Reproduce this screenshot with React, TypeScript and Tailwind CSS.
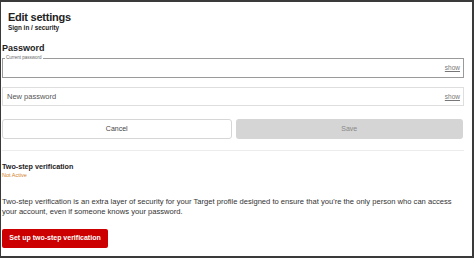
import React from "react";

export default function App() {
  return (
    <div
      className="w-[474px] h-[258px] bg-[#3a3a3a] pt-[2px] pr-[2px] pb-[2px] pl-[1px] overflow-hidden"
      style={{ fontFamily: '"Liberation Sans", Arial, Helvetica, sans-serif' }}
    >
      <div className="bg-white h-full pl-[1px] pr-[8px] pt-[10px] text-[#222]">
        <div className="pl-[6px]">
          <div className="text-[11px] leading-[11px] font-bold tracking-[-0.25px]">Edit settings</div>
          <div className="mt-[1px] text-[6.4px] leading-[7px] font-bold">Sign in / security</div>
        </div>
        <div className="mt-[13px] text-[9px] leading-[9px] font-bold">Password</div>
        <div className="mt-[5px] relative h-[20px] border border-[#9a9a9a] flex items-center justify-end pr-[3px]">
          <span className="absolute left-[2px] top-[-4px] bg-white px-[1px] text-[4.5px] leading-[6px] text-[#666]">
            Current password
          </span>
          <span className="text-[6.5px] text-[#777] underline">show</span>
        </div>
        <div className="mt-[9px] h-[19px] border border-[#dedede] flex items-center justify-between pl-[4px] pr-[3px]">
          <span className="text-[7.5px] text-[#555]">New password</span>
          <span className="text-[6.5px] text-[#777] underline">show</span>
        </div>
        <div className="mt-[13px] flex gap-[4px] pr-[1px]">
          <button className="flex-1 h-[20px] rounded-[3px] border border-[#d6d6d6] bg-white text-[7px] text-[#444]">
            Cancel
          </button>
          <button className="flex-1 h-[20px] rounded-[3px] bg-[#d5d5d5] text-[7px] text-[#888]">
            Save
          </button>
        </div>
        <div className="mt-[11px] h-px bg-[#ececec]" />
        <div className="mt-[12px] text-[7.2px] leading-[8px] font-bold">Two-step verification</div>
        <div className="mt-[1px] text-[5.5px] leading-[6px] text-[#d4822a]">Not Active</div>
        <p className="mt-[19px] text-[7.6px] leading-[9.5px] text-[#333]">
          Two-step verification is an extra layer of security for your Target profile designed to ensure that you're the only person who can access your account, even if someone knows your password.
        </p>
        <button className="mt-[13px] h-[19px] w-[106px] rounded-[2px] bg-[#cc0000] text-white text-[7px] font-bold">
          Set up two-step verification
        </button>
      </div>
    </div>
  );
}
